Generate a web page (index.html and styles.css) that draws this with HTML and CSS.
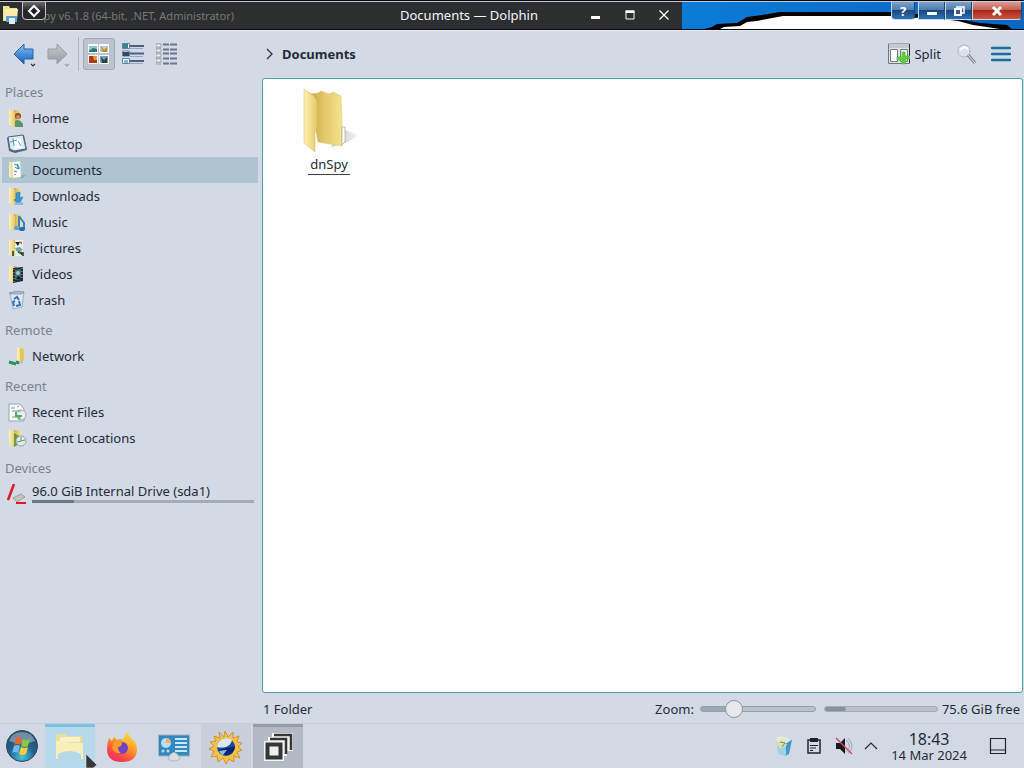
FILE: index.html
```html
<!DOCTYPE html>
<html lang="en">
<head>
    <meta charset="UTF-8">
    <meta name="viewport" content="width=device-width, initial-scale=1.0">
    <title>Documents — Dolphin</title>
    <link rel="stylesheet" href="styles.css">
</head>
<body>
    <!-- shared gradients and folder shape -->
    <svg class="defs" width="0" height="0" aria-hidden="true">
        <defs>
            <linearGradient id="gold" x1="0" y1="0" x2="1" y2="0">
                <stop offset="0" stop-color="#fdf3b4"/>
                <stop offset="1" stop-color="#e6c866"/>
            </linearGradient>
            <linearGradient id="goldBack" x1="0" y1="0" x2="1" y2="0">
                <stop offset="0" stop-color="#c2a14a"/>
                <stop offset=".45" stop-color="#e3c769"/>
                <stop offset="1" stop-color="#f5e391"/>
            </linearGradient>
            <linearGradient id="blue" x1="0" y1="0" x2="0" y2="1">
                <stop offset="0" stop-color="#8cc4f2"/>
                <stop offset=".5" stop-color="#4791dc"/>
                <stop offset="1" stop-color="#1f5fb4"/>
            </linearGradient>
            <linearGradient id="gray" x1="0" y1="0" x2="0" y2="1">
                <stop offset="0" stop-color="#c4c8ce"/>
                <stop offset="1" stop-color="#979ca3"/>
            </linearGradient>
            <g id="folder">
                <path d="M7 2l7 1v13l-7 1z" fill="url(#goldBack)"/>
                <path d="M2 1l6 3v15l-6-2z" fill="url(#gold)"/>
            </g>
        </defs>
    </svg>

    <header class="titlebar">
        <div class="back-window">
            <svg class="app-icon" width="20" height="24" viewBox="0 0 20 24">
                <path d="M3 2h6l1 2h7v13H3z" fill="#f1e08a"/>
                <path d="M4 5h14l-1 11H4z" fill="#f8edae"/>
                <path d="M6 12h11v6H6z" fill="#5aa5cf"/>
                <path d="M9 14h6v6H9z" fill="#e4eef2"/>
            </svg>
            <span class="back-title">dnSpy v6.1.8 (64-bit, .NET, Administrator)</span>
            <button class="menu-badge" aria-label="Window menu">
                <svg width="14" height="14" viewBox="0 0 14 14"><path d="M7 2l5 5-5 5-5-5z" fill="#222" stroke="#fff" stroke-width="2"/></svg>
            </button>
        </div>
        <div class="front-window">
            <h1>Documents — Dolphin</h1>
            <div class="window-controls">
                <button aria-label="Minimize"><svg width="12" height="12" viewBox="0 0 12 12"><path d="M1 7h9v3H1z" fill="#fff"/></svg></button>
                <button aria-label="Maximize"><svg width="12" height="12" viewBox="0 0 12 12"><path d="M2 2h8v8H2z" fill="none" stroke="#fff"/><path d="M1.500 1.500h9v2.500h-9z" fill="#fff"/></svg></button>
                <button aria-label="Close"><svg width="12" height="12" viewBox="0 0 12 12"><path d="M1.500 1.500l9 9m0-9l-9 9" stroke="#fff" stroke-width="1.300"/></svg></button>
            </div>
        </div>
        <div class="wallpaper">
            <svg class="wallpaper-art" viewBox="0 0 342 27" preserveAspectRatio="none">
                <path d="M22 27l8-2 5-3 20-1 10-6 15-2 18-3h120l58 7 22 4 27 2 5 4z" fill="#000"/>
                <path d="M38 27l4-2 16-1 7-4 10-1 10-2 16-3h107l60 4 8 1 15 4 27 4z" fill="#fff"/>
            </svg>
            <div class="aero-controls">
                <button class="aero help" aria-label="Help">?</button>
                <button class="aero" aria-label="Minimize window"><svg width="14" height="12" viewBox="0 0 14 12"><path d="M2 7h10v3H2z" fill="#fff"/></svg></button>
                <button class="aero" aria-label="Restore window"><svg width="14" height="12" viewBox="0 0 14 12"><path d="M5 2h7v6H5z" fill="none" stroke="#fff" stroke-width="1.500"/><path d="M3 4h6v6H3z" fill="#3c5c86" stroke="#fff" stroke-width="2"/></svg></button>
                <button class="aero close" aria-label="Close window"><svg width="14" height="12" viewBox="0 0 14 12"><path d="M3 2l8 8m0-8l-8 8" stroke="#fff" stroke-width="3"/></svg></button>
            </div>
        </div>
    </header>

    <main class="dolphin">
        <div class="toolbar">
            <div class="tools">
                <button class="tool nav" aria-label="Back">
                    <svg width="28" height="30" viewBox="0 0 28 30">
                        <path d="M4 15L14 5v5h9v10h-9v5z" fill="url(#blue)" stroke="#2b62a8"/>
                        <path d="M21 25l2 2 2-2" fill="none" stroke="#30363e" stroke-width="1.200"/>
                    </svg>
                </button>
                <button class="tool nav" aria-label="Forward">
                    <svg width="28" height="30" viewBox="0 0 28 30">
                        <path d="M23 15L13 5v5H4v10h9v5z" fill="url(#gray)" stroke="#989da5"/>
                        <path d="M21 25l2 2 2-2" fill="none" stroke="#9aa0a9" stroke-width="1.200"/>
                    </svg>
                </button>
                <span class="divider"></span>
                <button class="tool active" aria-label="Icons view">
                    <svg width="22" height="22" viewBox="0 0 22 22">
                        <path d="M0 1h10v9H0zM11 1h10v9H11zM0 12h10v9H0zM11 12h10v9H11z" fill="#fff"/>
                        <path d="M1 3h8v6H1z" fill="#8fc4d8"/><path d="M1 8l4-3 4 1v3H1z" fill="#277872"/>
                        <path d="M12 3h8v6h-8z" fill="#c1c9d2"/><path d="M13 3l3 4 3-3v5h-5z" fill="#b59a2a"/>
                        <path d="M1 13h8v7H1z" fill="#a83c18"/><path d="M5 13h4v4H6z" fill="#e7962e"/>
                        <path d="M12 13h8v7h-8z" fill="#6c9ccb"/><path d="M13 14l3 3 3-3v6h-5z" fill="#2c4730"/>
                    </svg>
                </button>
                <button class="tool" aria-label="Compact view">
                    <svg width="22" height="22" viewBox="0 0 22 22">
                        <path d="M.500 .500h7v5h-7zM.500 8h7v5h-7zM.500 15.500h7v5h-7z" fill="#f3f8fb" stroke="#62839e"/>
                        <path d="M1 1h5v4H1z" fill="#36849a"/><path d="M1 9h6v4H1z" fill="#334567"/><path d="M2 17h4v3H2z" fill="#8bb4ce"/>
                        <path d="M8 3h14M8 10.500h14M8 18h14" stroke="#4c6087" stroke-width="2"/>
                        <path d="M8 5.500h13M8 13.500h13M8 20.500h13" stroke="#98a7bf"/>
                    </svg>
                </button>
                <button class="tool" aria-label="Details view">
                    <svg width="22" height="22" viewBox="0 0 22 22">
                        <path d="M1 0v22M4 0v22" stroke="#8696a8"/>
                        <path d="M0 1h5v3H0zM0 6h5v3H0zM0 11h5v3H0zM0 16h5v3H0z" fill="#f2f4ec" stroke="#9aa5ad"/>
                        <path d="M7 1.500h6M14 1.500h7M7 6.500h6M14 6.500h7M7 10.500h6M14 10.500h7M7 15.500h6M14 15.500h7M7 20.500h6M14 20.500h7" stroke="#68778a" stroke-width="2"/>
                    </svg>
                </button>
            </div>
            <nav class="breadcrumb" aria-label="Location">
                <svg width="12" height="12" viewBox="0 0 12 12"><path d="M3 1l5 5-5 5" fill="none" stroke="#30363d" stroke-width="1.300"/></svg>
                <a href="#documents">Documents</a>
            </nav>
            <button class="split">
                <svg width="22" height="22" viewBox="0 0 22 22">
                    <path d="M.500 1h21v19.500H.500z" fill="#dde1e5" stroke="#71777d"/>
                    <path d="M1 1h20v4H1z" fill="#c3c9cd"/>
                    <path d="M2.500 6.500h7v12h-7z" fill="#fff" stroke="#777d83"/>
                    <path d="M12.500 6.500h7v12h-7z" fill="#eaf2e8" stroke="#777d83"/>
                    <path d="M21.500 1v19" stroke="#252a2e"/>
                    <path d="M14 9h3v4h5v3h-4l-1 5h-3v-4H9v-3h5z" fill="#5bd137" stroke="#4bb03a" stroke-width=".600"/>
                </svg>
                <span>Split</span>
            </button>
            <button class="tool find" aria-label="Search">
                <svg width="22" height="22" viewBox="0 0 22 22">
                    <circle cx="8" cy="8" r="6" fill="#dbe2ec" stroke="#9aa2ac" stroke-dasharray="2 1"/>
                    <path d="M4 7q4-5 8-1" fill="none" stroke="#fff" stroke-width="2"/>
                    <path d="M12 12l7 8" stroke="#7b828a" stroke-width="3"/><path d="M12 12l7 8" stroke="#edf0f3"/>
                </svg>
            </button>
            <button class="tool" aria-label="Menu">
                <svg width="20" height="16" viewBox="0 0 20 16"><path d="M1 2h18M1 8h18M1 14h18" stroke="#16719f" stroke-width="2.500" stroke-linecap="round"/></svg>
            </button>
        </div>

        <div class="columns">
            <aside class="places">
                <h2>Places</h2>
                <a href="#home">
                    <svg width="20" height="20" viewBox="0 0 20 20"><use href="#folder"/><circle cx="11" cy="8" r="3" fill="#7b4b2c"/><circle cx="11" cy="9" r="2" fill="#c98f63"/><path d="M8 13q4-3 8 3v3H8z" fill="#5b9272"/></svg>
                    Home
                </a>
                <a href="#desktop">
                    <svg width="20" height="20" viewBox="0 0 20 20"><path d="M0 4l17-3 3 15-12 3-6-2z" fill="#50668a"/><path d="M1 3l15-2 3 14-12 2-4-2z" fill="#d9edf7" stroke="#4e6381"/><path d="M6 4l8 1 1 9-7 1z" fill="#fff"/><path d="M3 8l7-2M6 4l1 8M11 7l3 5" stroke="#6395b7"/></svg>
                    Desktop
                </a>
                <a href="#documents" class="current">
                    <svg width="20" height="20" viewBox="0 0 20 20"><path d="M13 15h6l-3 3h-4z" fill="#7d95a2" opacity=".6"/><use href="#folder"/><path d="M5 2l8-1 1 16-8 1z" fill="#fff" stroke="#c0d4da" stroke-width=".500"/><path d="M7 4l2 1M8 7l3 2M7 11l3 1M7 15l2-1" stroke="#62777e"/><path d="M10 4l2 5" stroke="#22a5c5" stroke-width="2"/></svg>
                    Documents
                </a>
                <a href="#downloads">
                    <svg width="20" height="20" viewBox="0 0 20 20"><use href="#folder"/><path d="M9 7l4-1v6l3-1-4 7-5-4 2-1z" fill="#3e94d5" stroke="#2473b6" stroke-width=".600"/><path d="M8 17l8-1v3H8z" fill="#89bce0"/></svg>
                    Downloads
                </a>
                <a href="#music">
                    <svg width="20" height="20" viewBox="0 0 20 20"><use href="#folder"/><path d="M12 4v12M12 4l5 7v6" fill="none" stroke="#3b83bd" stroke-width="2"/><ellipse cx="10" cy="16" rx="3" ry="2" fill="#5ca3d0"/><ellipse cx="15" cy="17" rx="3" ry="2" fill="#2f6ba5"/></svg>
                    Music
                </a>
                <a href="#pictures">
                    <svg width="20" height="20" viewBox="0 0 20 20"><use href="#folder"/><path d="M8 2h8v16H8z" fill="#edf0e9"/><path d="M8 4h5l-2 4z" fill="#26221e"/><path d="M12 3l3 1v3z" fill="#e25637"/><path d="M8 10l5-1 3 3-6 2z" fill="#6aa0bd"/><path d="M6 13v5M11 14l5 1v3" stroke="#4d5f3a" stroke-width="2"/></svg>
                    Pictures
                </a>
                <a href="#videos">
                    <svg width="20" height="20" viewBox="0 0 20 20"><use href="#folder"/><path d="M6 4l10-1v14l-10 2z" fill="#252c2f"/><path d="M8 6l6-1v10l-6 1z" fill="#3d7086"/><circle cx="11" cy="9" r="2" fill="#a8c6cf"/><path d="M9 15q3-6 5 0" fill="#18212b"/><path d="M7 5v13M15 4v12" stroke="#aaa" stroke-dasharray="1 2"/></svg>
                    Videos
                </a>
                <a href="#trash">
                    <svg width="20" height="20" viewBox="0 0 20 20"><path d="M3 3l14-1-2 15-9 2z" fill="#dce9f3" stroke="#8ea2b8" stroke-width=".800"/><path d="M2 3q7-3 15-1l-2 2H4z" fill="#aebcc9" stroke="#6f8297" stroke-width=".600"/><path d="M7 9l3-2 2 3M12 11l1 4-4 1M7 16l-1-4 2-1" fill="none" stroke="#3773bd" stroke-width="2"/></svg>
                    Trash
                </a>

                <h2>Remote</h2>
                <a href="#network">
                    <svg width="20" height="20" viewBox="0 0 20 20"><path d="M10 1l6 1v12l-6 2z" fill="url(#gold)"/><path d="M13 2l4 2v9l-4 3z" fill="#e9c652"/><path d="M15 14v3h-3" fill="none" stroke="#a5abb0"/><path d="M2 16l7 2" stroke="#299455" stroke-width="3"/><path d="M9 16l3 1" stroke="#2a8a5a" stroke-width="3"/></svg>
                    Network
                </a>

                <h2>Recent</h2>
                <a href="#recent-files">
                    <svg width="20" height="20" viewBox="0 0 20 20"><path d="M2 2h11l4 5v12H2z" fill="#f8fafb" stroke="#98a4af"/><circle cx="14" cy="13" r="5" fill="#e7edf0" stroke="#9aacae"/><path d="M4 6h4M10 5l2-1M5 9h9M5 15h4" stroke="#7c9793"/><path d="M9 10v4h6M10 13l3 4" fill="none" stroke="#4faf57" stroke-width="2"/></svg>
                    Recent Files
                </a>
                <a href="#recent-locations">
                    <svg width="20" height="20" viewBox="0 0 20 20"><use href="#folder"/><path d="M7 5l5 3v8l-5 3z" fill="#6c9545"/><circle cx="14" cy="13" r="5" fill="#e3ebe8" stroke="#94a5a5"/><path d="M14 9v4l4-1M14 13l-4 1" fill="none" stroke="#5a9b6c"/></svg>
                    Recent Locations
                </a>

                <h2>Devices</h2>
                <a href="#sda1" class="drive">
                    <svg width="20" height="20" viewBox="0 0 20 20"><path d="M6 14l8-4 4 3-8 5z" fill="#c4c5bd" stroke="#858983" stroke-width=".700"/><path d="M7 0L1 16" stroke="#df1c25" stroke-width="2.500"/><path d="M9 19h10" stroke="#dd1820" stroke-width="2"/></svg>
                    <span class="drive-info">
                        <span>96.0 GiB Internal Drive (sda1)</span>
                        <span class="usage"><span class="used"></span></span>
                    </span>
                </a>
            </aside>

            <section class="content">
                <div class="files">
                    <a class="file" href="#dnspy">
                        <svg width="64" height="64" viewBox="0 0 64 64">
                            <defs>
                                <linearGradient id="shade" x1="0" y1="0" x2="1" y2="0"><stop offset="0" stop-color="#777"/><stop offset="1" stop-color="#eee"/></linearGradient>
                            </defs>
                            <path d="M34 58l14-17 13 5-10 7z" fill="url(#shade)" opacity=".5"/>
                            <path d="M12 5l9-1 3-2 8 3 4-2 8 4 1 28v22l-24-4z" fill="url(#goldBack)" stroke="#e2c66f" stroke-width=".600"/>
                            <path d="M45 38h3v15l-3 3z" fill="#fff" stroke="#a8a599" stroke-width=".700"/>
                            <path d="M7 0l10 7 3 5v27l-2 4v20L7 54z" fill="url(#gold)" stroke="#d7b95b" stroke-width=".500"/>
                        </svg>
                        <span>dnSpy</span>
                    </a>
                </div>
                <footer class="statusbar">
                    <span class="count">1 Folder</span>
                    <label for="zoom">Zoom:</label>
                    <input type="range" id="zoom" min="0" max="100" value="25">
                    <div class="space"><div class="space-used"></div></div>
                    <span>75.6 GiB free</span>
                </footer>
            </section>
        </div>
    </main>

    <footer class="taskbar">
        <button class="start" aria-label="Start">
            <svg width="34" height="34" viewBox="0 0 34 34">
                <defs><radialGradient id="orb" cx=".5" cy=".85" r=".8"><stop offset="0" stop-color="#46c8dc"/><stop offset=".5" stop-color="#23628e"/><stop offset="1" stop-color="#274a69"/></radialGradient></defs>
                <circle cx="17" cy="17" r="15.500" fill="url(#orb)" stroke="#2c4966"/>
                <path d="M4 12q3-9 13-9t13 9q-12 5-26 0z" fill="#cbdbe4" opacity=".45"/>
                <path d="M11 9q3-2 6 0l-2 7q-3-2-6 0z" fill="#ec6234"/>
                <path d="M18 10q4 2 7 0l-2 7q-3 2-7 0z" fill="#8fc640"/>
                <path d="M9 17q3-2 6 0l-2 7q-3-2-6 0z" fill="#72b8ed"/>
                <path d="M16 18q4 2 7 0l-2 7q-4 2-7 0z" fill="#f8cf3e"/>
            </svg>
        </button>
        <div class="tasks">
            <button class="task focused" aria-label="Dolphin">
                <svg width="32" height="32" viewBox="0 0 32 32">
                    <path d="M2 3h9l2 2h15v20H2z" fill="#efdc97"/>
                    <path d="M6 6h20v5H6z" fill="#f8f1cf"/>
                    <path d="M2 10h10l2 2h15v16H2z" fill="#f9edb9"/>
                    <path d="M4 23q11-6 23 0v7h-4q-7-4-14 0H4z" fill="#b5d8e9"/>
                </svg>
                <svg class="pointer" width="12" height="14" viewBox="0 0 12 14"><path d="M1 0l11 11-4 3H1z" fill="#36383b" stroke="#eee" stroke-width=".500"/></svg>
            </button>
            <button class="task" aria-label="Firefox">
                <svg width="32" height="32" viewBox="0 0 32 32">
                    <defs><linearGradient id="fox" x1=".8" y1="0" x2=".2" y2="1"><stop offset="0" stop-color="#ffe43e"/><stop offset=".45" stop-color="#ff9227"/><stop offset=".75" stop-color="#f94844"/><stop offset="1" stop-color="#e92c70"/></linearGradient></defs>
                    <path d="M3 7l3 3 2-4 3 3q4-2 7 0 0-5 4-8 1 5 4 7 5 4 5 10 0 13-15 13T1 18q0-6 2-11z" fill="url(#fox)"/>
                    <circle cx="16" cy="17" r="6" fill="#7141c5"/>
                    <path d="M8 11q8-3 8 2-1 3-4 3 0 4 3 6-7 1-9-5z" fill="#ff9b27"/>
                    <path d="M16 10q7 0 8 7 0-8-6-9z" fill="#ffc736"/>
                </svg>
            </button>
            <button class="task" aria-label="System Settings">
                <svg width="34" height="32" viewBox="0 0 34 32">
                    <path d="M1.500 4h31v21h-31z" fill="#3488bd" stroke="#9eb2c0"/>
                    <circle cx="9" cy="12" r="5" fill="#b7def3"/><path d="M9 12V7a5 5 0 0 1 5 5z" fill="#f1ad74"/>
                    <path d="M18 8h12M18 12h12M18 16h12M18 20h12" stroke="#c9e7f6" stroke-width="2"/>
                    <circle cx="6" cy="20" r="1.500" fill="#b7def3"/><circle cx="11" cy="20" r="1.500" fill="#b7def3"/>
                    <path d="M11 28q1-5 6-7 5 2 6 7-6 4-12 0z" fill="#dadddf" stroke="#a1a6aa" stroke-width=".600"/>
                </svg>
            </button>
            <button class="task open" aria-label="Weather">
                <svg width="34" height="34" viewBox="0 0 34 34">
                    <path d="M16 1l3 6 5-5v6l6-2-2 6 5 1-4 4 4 3-5 2 3 6-6-2v6l-5-3-3 5-3-6-5 4-1-6-6 1 3-6-5-2 5-3-4-4 6-1-2-5 6 2-1-6 5 5z" fill="#f4c142" stroke="#cc8426" stroke-width=".800"/>
                    <circle cx="17" cy="17" r="9" fill="#1c4aa6"/>
                    <path d="M8 17a9 9 0 0 1 9-9q4 0 6 2-1 5-6 7-5 1-9 0z" fill="#dce9f0"/>
                    <path d="M26 16q-2 1-9 2l-8 2a9 9 0 0 0 17-4z" fill="#0b2274"/><path d="M10 21q5-1 8-1l-4 5q-3-1-4-4z" fill="#8fb8de"/>
                </svg>
            </button>
            <button class="task raised" aria-label="Window list">
                <svg width="34" height="34" viewBox="0 0 34 34">
                    <path d="M11 3h21v18h-6v5h-3v5H3V11h4V7h4z" fill="#f5f5f5"/>
                    <path d="M13 5h17v15M9 9h16v15" fill="none" stroke="#343638" stroke-width="2.500"/>
                    <path d="M6.500 14.500h13v13h-13z" fill="#eee" stroke="#343638" stroke-width="4"/>
                </svg>
            </button>
        </div>
        <div class="tray">
            <button aria-label="Recycle bin"><svg width="20" height="22" viewBox="0 0 20 22"><path d="M11 6l7-1-3 14-4 2z" fill="#3d9ad0"/><path d="M3 5l9 2v14l-8-2z" fill="#9dd3ea"/><path d="M2 2l5-1 6 1 4 3-4 3-10-1z" fill="#dfe9d8"/><path d="M3 9l6-5 4 6-6 4z" fill="#f0dc93"/><path d="M6 7l5 1-3 4" fill="none" stroke="#4e91a8"/></svg></button>
            <button aria-label="Clipboard"><svg width="16" height="18" viewBox="0 0 16 18"><path d="M2 3h12v13H2z" fill="none" stroke="#202428" stroke-width="1.500"/><path d="M4 1h8v4H4z" fill="#202428"/><path d="M4 8.500h8M4 11h6M4 13.500h3" stroke="#202428"/></svg></button>
            <button aria-label="Volume muted"><svg width="20" height="18" viewBox="0 0 20 18"><path d="M2 6h4l5-5v16l-5-5H2z" fill="#17191b"/><path d="M12 3q7 6 0 12M14 1q8 8 0 16" fill="none" stroke="#a2a7ae"/><path d="M2 1l16 16" stroke="#d4456c" stroke-width="1.500"/></svg></button>
            <button class="more" aria-label="Show hidden icons"><svg width="16" height="12" viewBox="0 0 16 12"><path d="M2 9l6-6 6 6" fill="none" stroke="#25292e" stroke-width="1.200"/></svg></button>
        </div>
        <div class="clock">
            <time class="hour">18:43</time>
            <time datetime="2024-03-14">14 Mar 2024</time>
        </div>
        <button class="show-desktop" aria-label="Show desktop">
            <svg width="18" height="18" viewBox="0 0 18 18"><path d="M1.500 1.500h15v15h-15zM2 13h14" fill="none" stroke="#202428" stroke-width="1.200"/></svg>
        </button>
    </footer>
</body>
</html>
```

FILE: styles.css
```css
* {
    margin: 0;
    padding: 0;
    box-sizing: border-box;
}

body {
    display: flex;
    flex-direction: column;
    min-height: 100vh;
    font-family: 'Noto Sans', sans-serif;
    font-size: 13px;
    line-height: 18px;
    color: #232b36;
    background: #d3d9e5;
}

button {
    font: inherit;
    color: inherit;
    background: none;
    border: none;
    display: flex;
    align-items: center;
    justify-content: center;
}

a {
    color: inherit;
    text-decoration: none;
}

svg {
    display: block;
    flex-shrink: 0;
}

.defs {
    position: absolute;
}

/* Title bar */
.titlebar {
    display: grid;
    grid-template-columns: 256px 426px 1fr;
    height: 31px;
    background: #2d2e31;
    border-top: 1px solid #08080c;
    border-bottom: 1px solid #e9edf3;
    box-shadow: inset 0 1px #c9c9d0, inset 0 -1px #08080c;
}

.back-window {
    position: relative;
    display: flex;
    align-items: center;
}

.back-title {
    padding-left: 4px;
    font-size: 11px;
    color: #77787b;
    white-space: nowrap;
}

.menu-badge {
    position: absolute;
    left: 22px;
    top: 0;
    width: 24px;
    height: 19px;
    background: linear-gradient(#6b6c70, #252629 50%);
    border: 1px solid #c3c4c8;
    border-radius: 0 0 4px 4px;
}

.front-window {
    display: grid;
    grid-template-columns: 1fr auto 1fr;
    align-items: center;
    padding-bottom: 2px;
}

.front-window h1 {
    grid-column: 2;
    font-size: 13px;
    font-weight: normal;
    color: #f5f6f8;
}

.window-controls {
    display: flex;
    justify-content: flex-end;
    padding-right: 1px;
}

.window-controls button {
    width: 34px;
    height: 26px;
}

.wallpaper {
    position: relative;
    margin: 1px 0;
    background: linear-gradient(90deg, #0b7bd8, #0b66c2);
}

.wallpaper-art {
    position: absolute;
    width: 100%;
    height: 100%;
}

.aero-controls {
    position: relative;
    display: flex;
    justify-content: flex-end;
    padding-right: 2px;
}

.aero {
    width: 27px;
    height: 18px;
    color: #fff;
    background: linear-gradient(#7ba3cb, #4a78a8 50%, #1c467c 50%, #2d72b4);
    border: 1px solid #c5d9ec;
    border-top: none;
    border-right-color: #24446b;
}

.help {
    width: 24px;
    margin-right: 3px;
    font-weight: bold;
    border-radius: 0 0 4px 4px;
}

.close {
    width: 50px;
    background: linear-gradient(#dd9b94, #c4594c 50%, #a7291c 50%, #cc543f);
    border-radius: 0 0 4px 0;
}

/* Dolphin */
.dolphin {
    flex: 1;
    display: flex;
    flex-direction: column;
}

.toolbar {
    display: flex;
    align-items: center;
    height: 47px;
    padding: 0 6px 2px 0;
}

.tools {
    display: flex;
    align-items: center;
    width: 262px;
    padding-left: 10px;
}

.tool {
    width: 34px;
    height: 32px;
}

.nav {
    justify-content: flex-start;
}

.divider {
    width: 1px;
    height: 34px;
    margin-right: 4px;
    background: #aeb5c1;
}

.active {
    width: 32px;
    margin-right: 1px;
    background: #bdc3ce;
    border: 1px solid #a2a8b4;
    border-radius: 3px;
}

.breadcrumb {
    flex: 1;
    display: flex;
    align-items: center;
    gap: 6px;
    padding-left: 2px;
    font-weight: bold;
}

.split {
    gap: 4px;
    margin-right: 9px;
}

.columns {
    flex: 1;
    display: flex;
}

.places {
    width: 262px;
    padding: 1px 4px 0 2px;
}

.places h2 {
    margin-top: 4px;
    padding-left: 3px;
    font-size: 13px;
    font-weight: normal;
    line-height: 26px;
    color: #7b838f;
}

.places h2:first-child {
    margin-top: 0;
}

.places a {
    display: flex;
    align-items: center;
    gap: 5px;
    height: 26px;
    padding-left: 5px;
}

.places .current {
    background: #aec4d0;
}

.drive-info {
    flex: 1;
    display: flex;
    flex-direction: column;
    padding: 0 4px 3px 0;
}

.usage {
    height: 3px;
    background: #a3adb9;
}

.used {
    display: block;
    width: 19%;
    height: 100%;
    background: #667985;
}

.content {
    flex: 1;
    display: flex;
    flex-direction: column;
}

.files {
    flex: 1;
    margin-right: 1px;
    padding: 10px 30px;
    background: #fff;
    border: 1px solid #4ca0b5;
    border-radius: 3px;
}

.file {
    display: inline-flex;
    flex-direction: column;
    align-items: center;
    width: 72px;
}

.file span {
    margin-top: 1px;
    padding: 0 2px;
    line-height: 20px;
    border-bottom: 1px solid #3b424b;
}

.statusbar {
    display: flex;
    align-items: center;
    height: 30px;
    padding: 2px 4px 0 1px;
}

.count {
    flex: 1;
}

.statusbar input {
    appearance: none;
    width: 116px;
    height: 20px;
    margin: 0 8px 0 6px;
    background: none;
}

.statusbar input::-webkit-slider-runnable-track {
    height: 6px;
    background: linear-gradient(90deg, #9aa8b3 25%, #bac2cc 25%);
    border: 1px solid #929fab;
    border-radius: 3px;
}

.statusbar input::-webkit-slider-thumb {
    appearance: none;
    width: 18px;
    height: 18px;
    margin-top: -7px;
    background: #e6e8ec;
    border: 1px solid #8e959e;
    border-radius: 50%;
}

.space {
    width: 114px;
    height: 6px;
    margin-right: 4px;
    background: #bac2cc;
    border: 1px solid #a1aab6;
    border-radius: 3px;
}

.space-used {
    width: 19%;
    height: 100%;
    background: #84949e;
    border-radius: 3px;
}

/* Taskbar */
.taskbar {
    display: flex;
    align-items: center;
    height: 45px;
    background: #d3d9e4;
    border-top: 1px solid #c4cbd6;
}

.start {
    width: 43px;
    margin-right: 2px;
}

.tasks {
    flex: 1;
    display: flex;
    gap: 2px;
}

.task {
    position: relative;
    width: 50px;
    height: 44px;
    padding-bottom: 2px;
    border-top: 3px solid transparent;
}

.focused {
    background: #b6d9ec;
    border-top-color: #79c2e4;
}

.open {
    background: #c9d0dc;
}

.raised {
    background: #b4bac5;
    border-top-color: #969ca8;
}

.pointer {
    position: absolute;
    right: -2px;
    bottom: 0;
}

.tray {
    display: flex;
    align-items: center;
}

.tray button {
    width: 30px;
    height: 32px;
}

.tray .more {
    width: 24px;
}

.clock {
    display: flex;
    flex-direction: column;
    align-items: center;
    margin: 0 15px 0 8px;
    line-height: 14px;
}

.hour {
    font-size: 16px;
    line-height: 18px;
}

.show-desktop {
    width: 32px;
    height: 32px;
    margin-right: 10px;
}
```
